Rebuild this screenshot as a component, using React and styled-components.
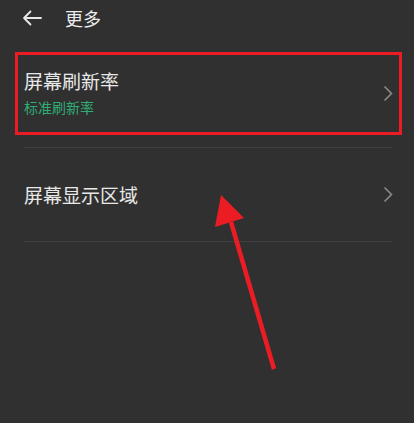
import React from 'react'
import styled, { createGlobalStyle } from 'styled-components'

const GlobalStyle = createGlobalStyle`
    html, body {
        margin: 0;
        padding: 0;
        background: #303030;
    }
    body {
        font-family: "Noto Sans CJK SC", "Noto Sans", sans-serif;
        color: #e8e8e8;
    }
`

const Page = styled.div`
    position: relative;
    width: 414px;
    height: 423px;
    overflow: hidden;
    background: #303030;
`

const Header = styled.div`
    display: flex;
    align-items: center;
    height: 35px;
    padding-left: 22px;
    gap: 23px;
`

const Title = styled.h1`
    margin: 0;
    font-size: 18px;
    font-weight: 400;
    line-height: 1;
    color: #ececec;
`

const List = styled.div`
    margin: 18px 21px 0 24px;
`

const Item = styled.div`
    position: relative;
    display: flex;
    align-items: ${p => (p.$sub ? 'flex-start' : 'center')};
    justify-content: space-between;
    height: ${p => p.$height}px;
    padding-top: ${p => (p.$sub ? 16 : 0)}px;
    box-sizing: border-box;
    border-bottom: 1px solid #3e3e3e;
`

const Texts = styled.div`
    display: flex;
    flex-direction: column;
    gap: 5px;
`

const Label = styled.div`
    font-size: 19px;
    line-height: 24px;
    color: #e8e8e8;
`

const Sub = styled.div`
    font-size: 14px;
    line-height: 18px;
    color: #2fae74;
`

const Chevron = styled.svg`
    flex: none;
    margin-top: ${p => p.$offset || 0}px;
`

const Highlight = styled.div`
    position: absolute;
    top: -1px;
    left: -9px;
    right: -9px;
    height: 83px;
    border: 3px solid #ec1c24;
    box-sizing: border-box;
    pointer-events: none;
`

const Overlay = styled.svg`
    position: absolute;
    left: 0;
    top: 0;
    pointer-events: none;
`

const BackArrow = () => (
    <svg width="20" height="16" viewBox="0 0 20 16">
        <path d="M19 8H2M8.5 1.5 2 8l6.5 6.5" fill="none" stroke="#e8e8e8" strokeWidth="1.8" strokeLinecap="round" strokeLinejoin="round" />
    </svg>
)

const Arrow = ({ offset }) => (
    <Chevron $offset={offset} width="10" height="17" viewBox="0 0 10 17">
        <path d="M1.5 1.5 8.5 8.5 1.5 15.5" fill="none" stroke="#8a8a8a" strokeWidth="1.6" />
    </Chevron>
)

const App = () => (
    <Page>
        <GlobalStyle />
        <Header>
            <BackArrow />
            <Title>更多</Title>
        </Header>
        <List>
            <Item $sub $height={95}>
                <Texts>
                    <Label>屏幕刷新率</Label>
                    <Sub>标准刷新率</Sub>
                </Texts>
                <Arrow offset={16} />
                <Highlight />
            </Item>
            <Item $height={94}>
                <Label>屏幕显示区域</Label>
                <Arrow />
            </Item>
        </List>
        <Overlay width="414" height="423" viewBox="0 0 414 423">
            <line x1="231" y1="222" x2="274" y2="369" stroke="#ec1c24" strokeWidth="4.5" />
            <polygon points="221,195 215,227 244,218" fill="#ec1c24" />
        </Overlay>
    </Page>
)

export default App
